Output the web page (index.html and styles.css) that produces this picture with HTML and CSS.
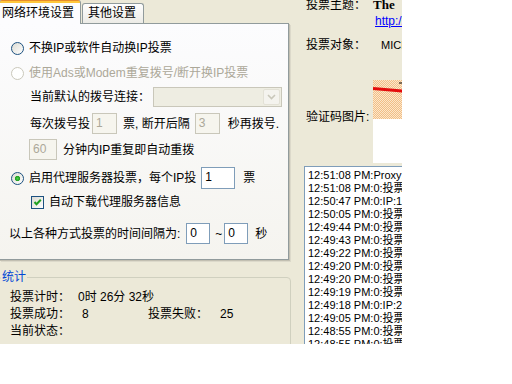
FILE: index.html
```html
<!DOCTYPE html>
<html lang="zh-CN">
<head>
<meta charset="utf-8">
<title>投票</title>
<link rel="stylesheet" href="styles.css">
</head>
<body>
<div class="app">
  <div class="left">
    <div class="tabs">
      <div class="tab active">网络环境设置</div>
      <div class="tab">其他设置</div>
    </div>
    <div class="page">
      <div class="row r1"><span class="radio"></span><span>不换IP或软件自动换IP投票</span></div>
      <div class="row r2"><span class="radio disabled"></span><span class="dis">使用Ads或Modem重复拨号/断开换IP投票</span></div>
      <div class="row r3"><span>当前默认的拨号连接：</span><span class="combo"><span class="combo-btn"><svg width="9" height="6" viewBox="0 0 9 6"><path d="M1 1 L4.5 4.5 L8 1" stroke="#C9C7BA" stroke-width="1.6" fill="none"/></svg></span></span></div>
      <div class="row r4"><span>每次拨号投</span><span class="inp off w25 m-a">1</span><span>票, 断开后隔</span><span class="inp off w25 m-b">3</span><span>秒再拨号.</span></div>
      <div class="row r5"><span class="inp off w28 m-c">60</span><span>分钟内IP重复即自动重拨</span></div>
      <div class="row r6"><span class="radio checked"></span><span>启用代理服务器投票，每个IP投</span><span class="inp w34 m-d">1</span><span>票</span></div>
      <div class="row r7"><span class="check"><svg width="11" height="11" viewBox="0 0 11 11"><path d="M2.5 5 L4.5 7.2 L8.8 2.8" stroke="#21A121" stroke-width="2" fill="none"/></svg></span><span>自动下载代理服务器信息</span></div>
      <div class="row r8"><span>以上各种方式投票的时间间隔为:</span><span class="inp w24 m-e">0</span><span>~</span><span class="inp w24 m-f">0</span><span>秒</span></div>
    </div>
    <fieldset class="stats">
      <legend>统计</legend>
      <div class="stat-grid">
        <span>投票计时：</span><span class="span3">0时 26分 32秒</span>
        <span>投票成功：</span><span class="num">8</span><span>投票失败：</span><span>25</span>
        <span>当前状态：</span><span class="span3"></span>
      </div>
    </fieldset>
  </div>
  <div class="right">
    <div class="irow topic">
      <span class="ilbl">投票主题：</span>
      <div class="ival"><div class="ttl">The</div><a class="link" href="#">http://www.vote.com/</a></div>
    </div>
    <div class="irow obj">
      <span class="ilbl">投票对象：</span>
      <span class="objval">MICHAEL JACKSON</span>
    </div>
    <div class="irow cap">
      <span class="ilbl caplbl">验证码图片:</span>
      <div class="captcha">
        <svg width="60" height="40" viewBox="0 0 60 40">
          <defs>
            <pattern id="dots" width="2" height="2" patternUnits="userSpaceOnUse">
              <rect width="2" height="2" fill="#FCE7CB"/>
              <rect width="1" height="1" fill="#F1BE86"/>
              <rect x="1" y="1" width="1" height="1" fill="#F1BE86"/>
            </pattern>
          </defs>
          <rect width="60" height="39" fill="url(#dots)"/>
          <path d="M0 8.5 L29 11 L60 13" stroke="#E40C0C" stroke-width="3" fill="none"/>
          <path d="M26 3 L29 3" stroke="#000" stroke-width="1"/>
        </svg>
      </div>
    </div>
    <div class="log">
      <div>12:51:08 PM:Proxy1.txt</div>
      <div>12:51:08 PM:0:投票成功</div>
      <div>12:50:47 PM:0:IP:1</div>
      <div>12:50:05 PM:0:投票失败</div>
      <div>12:49:44 PM:0:投票失败</div>
      <div>12:49:43 PM:0:投票失败</div>
      <div>12:49:22 PM:0:投票失败</div>
      <div>12:49:20 PM:0:投票失败</div>
      <div>12:49:20 PM:0:投票失败</div>
      <div>12:49:19 PM:0:投票失败</div>
      <div>12:49:18 PM:0:IP:2</div>
      <div>12:49:05 PM:0:投票失败</div>
      <div>12:48:55 PM:0:投票失败</div>
      <div>12:48:55 PM:0:投票失败</div>
    </div>
  </div>
</div>
</body>
</html>
```

FILE: styles.css
```css
* { box-sizing: border-box; }
html, body { margin: 0; padding: 0; background: #fff; }
body {
  font-family: "Liberation Sans", "Noto Sans CJK SC", sans-serif;
  font-size: 12px;
  color: #000;
}
.app {
  width: 402px;
  height: 344px;
  background: #ECE9D8;
  display: flex;
  overflow: hidden;
}
.left {
  width: 290px;
  flex: none;
  display: flex;
  flex-direction: column;
}
.tabs {
  display: flex;
  align-items: flex-end;
  height: 23px;
  flex: none;
  position: relative;
  z-index: 2;
}
.tab {
  height: 20px;
  width: 62px;
  margin-left: 1px;
  padding-left: 5px;
  border: 1px solid #919B9C;
  border-bottom: none;
  border-radius: 3px 3px 0 0;
  background: linear-gradient(#FEFEFE, #ECEBE6);
  line-height: 19px;
  white-space: nowrap;
}
.tab.active {
  height: 24px;
  width: 82px;
  margin-left: -1px;
  margin-bottom: -1px;
  padding: 3px 0 0 2px;
  border-top: none;
  background: linear-gradient(#E68B2C 0 1px, #FFC73C 1px 3px, #FCFCFE 3px);
  line-height: 20px;
}
.page {
  width: 290px;
  height: 237px;
  margin-left: -1px;
  flex: none;
  border: 1px solid #919B9C;
  background: linear-gradient(#FCFCFE, #F5F4EF);
  box-shadow: 1px 1px 0 #C2BFB1, 2px 2px 0 #DCD9CA;
  padding-top: 14px;
  display: flex;
  flex-direction: column;
}
.row {
  display: flex;
  align-items: center;
  height: 20px;
  line-height: 14px;
  white-space: nowrap;
  flex: none;
}
.r1 { padding-left: 11px; }
.r2 { padding-left: 11px; margin-top: 5px; }
.r3 { padding-left: 30px; margin-top: 4px; }
.r4 { padding-left: 30px; margin-top: 6px; height: 21px; }
.r5 { padding-left: 29px; margin-top: 5px; height: 21px; }
.r6 { padding-left: 11px; margin-top: 7px; height: 22px; }
.r7 { padding-left: 31px; margin-top: 3px; }
.r8 { padding-left: 9px; margin-top: 11px; height: 21px; }

.radio {
  width: 13px;
  height: 13px;
  flex: none;
  border-radius: 50%;
  border: 1px solid #1C5180;
  background: linear-gradient(135deg, #DCDBD3, #FFFFFF);
  margin-right: 5px;
}
.radio.disabled {
  border-color: #CAC8BB;
  background: #FFFFFF;
}
.radio.checked {
  background:
    radial-gradient(circle at 50% 50%, #4DD14D 0, #21A121 2.2px, transparent 3px),
    linear-gradient(135deg, #DCDBD3, #FFFFFF);
}
.check {
  width: 13px;
  height: 13px;
  flex: none;
  border: 1px solid #1C5180;
  background: linear-gradient(135deg, #DCDBD3, #FFFFFF);
  margin-right: 5px;
  display: flex;
}
.dis { color: #ACA899; }

.combo {
  width: 129px;
  height: 20px;
  margin-left: 3px;
  border: 1px solid #C9C7BA;
  background: #EEEDE2;
  display: flex;
  justify-content: flex-end;
  padding: 1px;
}
.combo-btn {
  width: 17px;
  height: 16px;
  border: 1px solid #E3E1D6;
  border-radius: 2px;
  background: #F4F3EE;
  display: flex;
  align-items: center;
  justify-content: center;
}

.inp {
  height: 21px;
  border: 1px solid #7F9DB9;
  background: #FFFFFF;
  padding-left: 3px;
  line-height: 18px;
  flex: none;
}
.inp.off {
  border-color: #C9C7BA;
  background: #F6F5EE;
  color: #ACA899;
}
.w24 { width: 24px; }
.w25 { width: 25px; }
.w28 { width: 28px; }
.w34 { width: 34px; height: 22px; }
.m-a { margin: 0 6px 0 2px; }
.m-b { margin: 0 8px 0 5px; }
.m-c { margin: 0 6px 0 0; }
.m-d { margin: 0 8px 0 5px; }
.m-e { margin: 0 5px 0 6px; }
.m-f { margin: 0 7px 0 2px; }

.stats {
  margin: 10px 0 0 -2px;
  width: 293px;
  height: 90px;
  flex: none;
  border: 1px solid #D0D0BF;
  border-radius: 4px;
  padding: 5px 0 0 0;
  min-width: 0;
}
.stats legend {
  padding: 0 1px;
  margin-left: 2px;
  color: #0046D5;
  line-height: 14px;
}
.stat-grid {
  margin-left: 11px;
  display: grid;
  grid-template-columns: 68px 70px 72px auto;
  line-height: 17px;
  white-space: nowrap;
}
.span3 { grid-column: span 3; }
.num { padding-left: 4px; }

.right {
  flex: 1;
  min-width: 0;
  padding-left: 16px;
  display: flex;
  flex-direction: column;
  white-space: nowrap;
}
.irow { display: flex; flex: none; }
.ilbl { width: 67px; flex: none; line-height: 16px; }
.topic { margin-top: -3px; }
.ttl {
  font-family: "Liberation Serif", serif;
  font-weight: bold;
  font-size: 13px;
  line-height: 16px;
}
.link {
  display: block;
  color: #0000FF;
  text-decoration: underline;
  line-height: 16px;
  padding-left: 2px;
}
.obj { margin-top: 8px; line-height: 16px; }
.objval { padding-left: 8px; font-size: 11px; }
.cap { margin-top: 27px; }
.caplbl { margin-top: 29px; }
.captcha {
  width: 60px;
  height: 83px;
  background: #FFFFFF;
  flex: none;
}
.captcha svg { display: block; }
.log {
  margin-top: 3px;
  margin-left: -2px;
  width: 200px;
  height: 200px;
  flex: none;
  border: 1px solid #7F9DB9;
  background: #FFFFFF;
  padding: 2px 3px;
  font-size: 11px;
  line-height: 13px;
}
```
